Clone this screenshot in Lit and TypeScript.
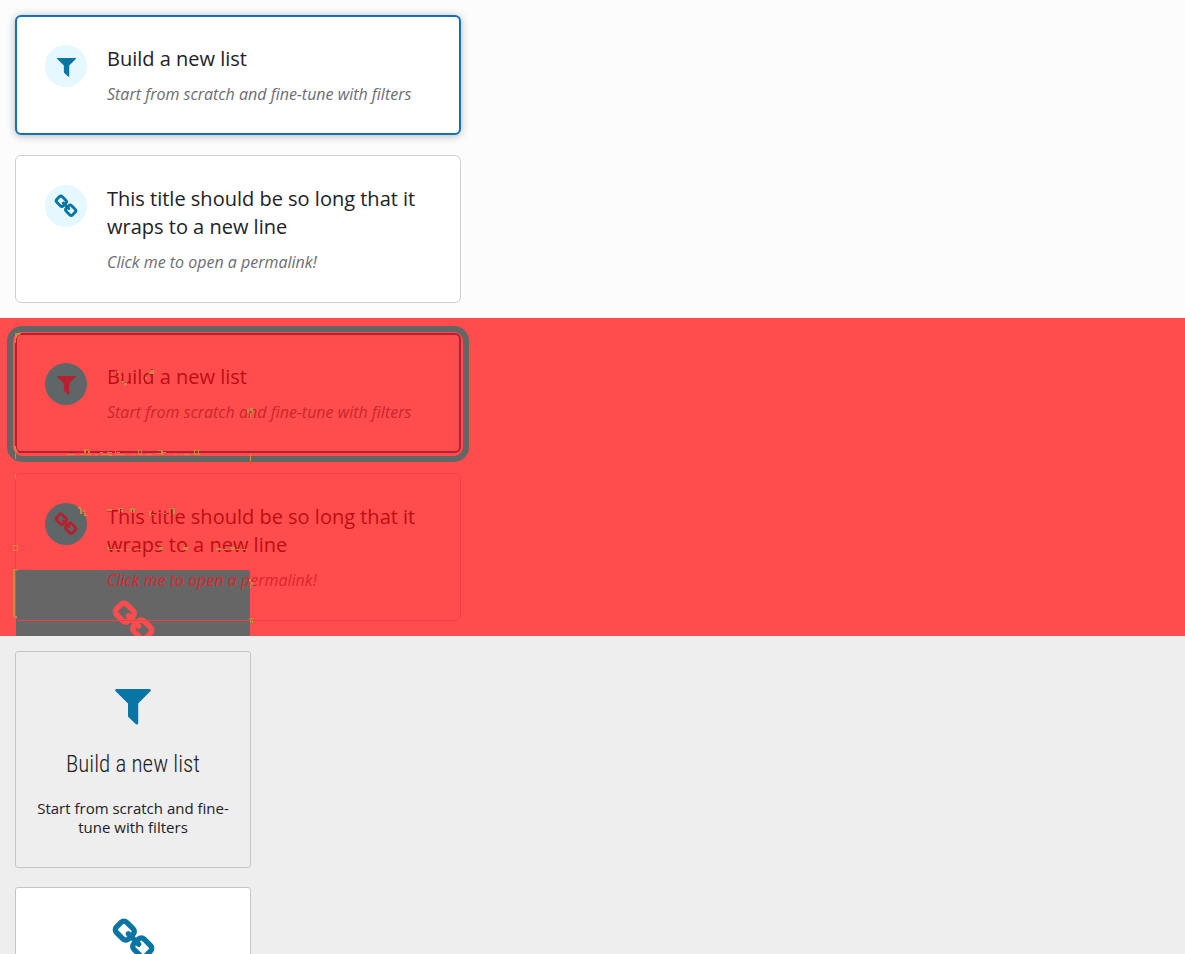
import { LitElement, html, css, svg, nothing } from "lit";
import { customElement, property } from "lit/decorators.js";
import { classMap } from "lit/directives/class-map.js";

type IconName = "filter" | "link";

interface CardData {
  icon: IconName;
  title: string;
  text: string;
  selected: boolean;
}

const CARDS: CardData[] = [
  { icon: "filter", title: "Build a new list", text: "Start from scratch and fine-tune with filters", selected: true },
  { icon: "link", title: "This title should be so long that it wraps to a new line", text: "Click me to open a permalink!", selected: false },
];

/* Changed pixels at shape edges: x, y, width, height. */
const SPECKS: number[][] = [
  [15, 333, 6, 1], [15, 334, 3, 2], [15, 336, 2, 2], [15, 338, 1, 5], [18, 334, 2, 1],
  [115, 371, 1, 2], [117, 371, 2, 2], [119, 374, 1, 2], [121, 376, 1, 2], [122, 381, 2, 2], [124, 383, 3, 2],
  [151, 370, 3, 4], [149, 372, 2, 2], [145, 377, 2, 2], [143, 380, 1, 2],
  [247, 409, 2, 4], [250, 408, 3, 3], [252, 411, 2, 2], [250, 413, 1, 6],
  [14, 446, 2, 3], [15, 449, 2, 3], [16, 451, 2, 1], [15, 453, 1, 6],
  [67, 454, 8, 1], [80, 454, 5, 1], [84, 449, 2, 4], [87, 449, 2, 1], [88, 451, 2, 2], [86, 454, 6, 1],
  [95, 454, 3, 1], [100, 452, 3, 1], [101, 454, 8, 1], [107, 452, 5, 1], [109, 454, 3, 2],
  [115, 450, 1, 4], [117, 452, 3, 1], [116, 454, 9, 1], [133, 454, 2, 1], [138, 449, 1, 5], [141, 449, 1, 5],
  [138, 454, 5, 1], [146, 454, 6, 1], [156, 453, 5, 1], [158, 450, 4, 1], [161, 451, 2, 4], [163, 452, 3, 1],
  [175, 454, 2, 1], [180, 454, 2, 1], [184, 454, 6, 1], [194, 449, 1, 5], [198, 449, 1, 5], [193, 454, 7, 1],
  [250, 454, 1, 8], [15, 474, 1, 5],
  [78, 507, 3, 2], [80, 509, 2, 5], [83, 510, 2, 2], [84, 513, 2, 3], [86, 515, 2, 1],
  [107, 509, 5, 2], [118, 508, 5, 1], [119, 509, 1, 4], [121, 510, 2, 2], [130, 508, 5, 1], [130, 509, 2, 3], [133, 509, 2, 3],
  [149, 511, 2, 4], [152, 514, 2, 1], [163, 513, 3, 1], [169, 508, 5, 1], [169, 509, 1, 7], [173, 509, 2, 5],
  [107, 547, 2, 3], [110, 549, 3, 1], [115, 549, 8, 1], [126, 549, 4, 1], [137, 549, 6, 1], [159, 547, 4, 3],
  [183, 547, 5, 3], [216, 548, 5, 2], [223, 549, 5, 1], [231, 547, 4, 3], [236, 549, 4, 1], [242, 549, 5, 1],
  [13, 545, 1, 6], [17, 545, 1, 6], [14, 545, 3, 1], [14, 550, 3, 1],
  [13, 569, 2, 48], [15, 569, 3, 1], [15, 616, 2, 2],
  [249, 579, 2, 3], [251, 582, 2, 3], [250, 585, 1, 3],
  [249, 618, 4, 1], [250, 619, 1, 4], [252, 620, 1, 3],
];

@customElement("card-icon")
export class CardIcon extends LitElement {
  @property() name: IconName = "filter";

  static styles = css`
    :host { display: inline-flex; }
    svg { display: block; width: 100%; fill: currentColor; overflow: visible; }
    .chain { fill: none; stroke: currentColor; stroke-width: 5.4; stroke-linecap: round; }
  `;

  render() {
    return this.name === "filter"
      ? html`<svg viewBox="0 0 36 36" aria-hidden="true">
          <path d="M1.2 0H34.8Q36.6 .4 35.6 2L23.2 14.4V34.2Q22.8 36 21 35.2L13.4 28Q13 27.6 13 27V14.4L.4 2Q-.6 .4 1.2 0Z" />
        </svg>`
      : html`<svg viewBox="0 0 41 40" aria-hidden="true">
          <g class="chain">
            <rect x="-8.5" y="-7.2" width="17" height="14.4" rx="4" transform="translate(11.8 11.6) rotate(45)" />
            <rect x="-8.5" y="-7.2" width="17" height="14.4" rx="4" transform="translate(29.2 28.4) rotate(45)" />
            <path d="M15.4 14.8 25.6 25.2" />
          </g>
        </svg>`;
  }
}

@customElement("option-card")
export class OptionCard extends LitElement {
  @property({ attribute: false }) card!: CardData;
  @property() variant: "row" | "diff" | "tile" = "row";

  static styles = css`
    :host { display: block; }
    button {
      position: relative;
      display: flex;
      box-sizing: border-box;
      width: 100%;
      margin: 0;
      font-family: "Open Sans", "Noto Sans", sans-serif;
      color: #212126;
      cursor: pointer;
    }
    .row, .diff {
      gap: 20px;
      padding: 29px;
      align-items: flex-start;
      text-align: left;
      border: 1px solid #cfcfd1;
      border-radius: 6px;
      background: #fff;
    }
    .row.selected, .diff.selected {
      padding: 28px;
      border: 2px solid #1371bb;
    }
    .row.selected { box-shadow: 0 1px 8px rgba(0, 0, 0, 0.28); }
    .badge {
      display: flex;
      flex: none;
      align-items: center;
      justify-content: center;
      width: 42px;
      height: 42px;
      border-radius: 50%;
      background: #e5f7ff;
      color: #0875a5;
    }
    .filter .badge card-icon { width: 19px; padding-top: 2px; }
    .link .badge card-icon { width: 22px; }
    .copy { display: flex; flex-direction: column; gap: 10px; }
    .title { font-size: 20px; line-height: 28px; }
    .text { font-size: 16px; line-height: 22px; font-style: italic; color: #6b6c73; }

    .diff { background: transparent; border-color: #f04043; color: #bd0d12; }
    .diff.selected { border-color: #b51f31; }
    .diff .badge { background: #5f6667; color: #b5222f; }
    .diff .text { color: #c9272c; }
    .diff.link .text { color: #dc252b; }
    .halo {
      position: absolute;
      inset: -9px -10px -11px;
      border: 6px solid #646565;
      border-radius: 15px;
    }

    .tile {
      flex-direction: column;
      align-items: center;
      padding: 31px 20px 30px;
      text-align: center;
      border: 1px solid #c5c5c5;
      border-radius: 3px;
      background: #fff;
    }
    .tile.selected { background: transparent; }
    .tile .badge { width: auto; height: 42px; align-items: flex-end; border-radius: 0; background: none; }
    .tile.link .badge { align-items: flex-start; }
    .tile.filter .badge card-icon { width: 36px; padding: 0; }
    .tile.link .badge card-icon { width: 41px; }
    .tile .copy { gap: 20px; padding-top: 26px; }
    .tile .title { font-family: "Roboto Condensed", Roboto, sans-serif; font-weight: 300; font-size: 23px; }
    .tile .text { font-size: 15px; line-height: 19px; font-style: normal; color: inherit; }
  `;

  render() {
    const { icon, title, text, selected } = this.card;
    const classes = { [this.variant]: true, [icon]: true, selected };
    return html`<button type="button" class=${classMap(classes)}>
      ${this.variant === "diff" && selected ? html`<span class="halo"></span>` : nothing}
      <span class="badge"><card-icon name=${icon}></card-icon></span>
      <span class="copy"><span class="title">${title}</span><span class="text">${text}</span></span>
    </button>`;
  }
}

@customElement("app-root")
export class AppRoot extends LitElement {
  static styles = css`
    :host { display: flex; flex-direction: column; height: 100vh; overflow: hidden; }
    section {
      position: relative;
      display: flex;
      flex: none;
      flex-direction: column;
      gap: 20px;
      padding: 15px;
      overflow: hidden;
    }
    option-card { width: 100%; max-width: 446px; }
    .list { background: #fcfcfc; }
    .changes { background: #ff4d4d; }
    .changes option-card { position: relative; }
    .tiles { flex: 1 1 0; min-height: 0; gap: 19px; background: #eeeeee; }
    .tiles option-card { max-width: 236px; }
    .ghost {
      position: absolute;
      left: 16px;
      top: 252px;
      display: flex;
      box-sizing: border-box;
      align-items: flex-start;
      justify-content: center;
      width: 234px;
      height: 216px;
      padding-top: 31px;
      border-radius: 2px;
      background: #666666;
      color: #ff4d4d;
    }
    .ghost card-icon { width: 41px; }
    .specks { position: absolute; left: 0; top: 0; width: 480px; height: 318px; fill: #c98a42; pointer-events: none; }
  `;

  private cards(variant: string) {
    return CARDS.map((card) => html`<option-card variant=${variant} .card=${card}></option-card>`);
  }

  render() {
    return html`
      <section class="list">${this.cards("row")}</section>
      <section class="changes">
        <div class="ghost"><card-icon name="link"></card-icon></div>
        ${this.cards("diff")}
        <svg class="specks" viewBox="0 318 480 318" aria-hidden="true" shape-rendering="crispEdges">
          ${SPECKS.map(([x, y, w, h]) => svg`<rect x=${x} y=${y} width=${w} height=${h} />`)}
        </svg>
      </section>
      <section class="tiles">${this.cards("tile")}</section>
    `;
  }
}
